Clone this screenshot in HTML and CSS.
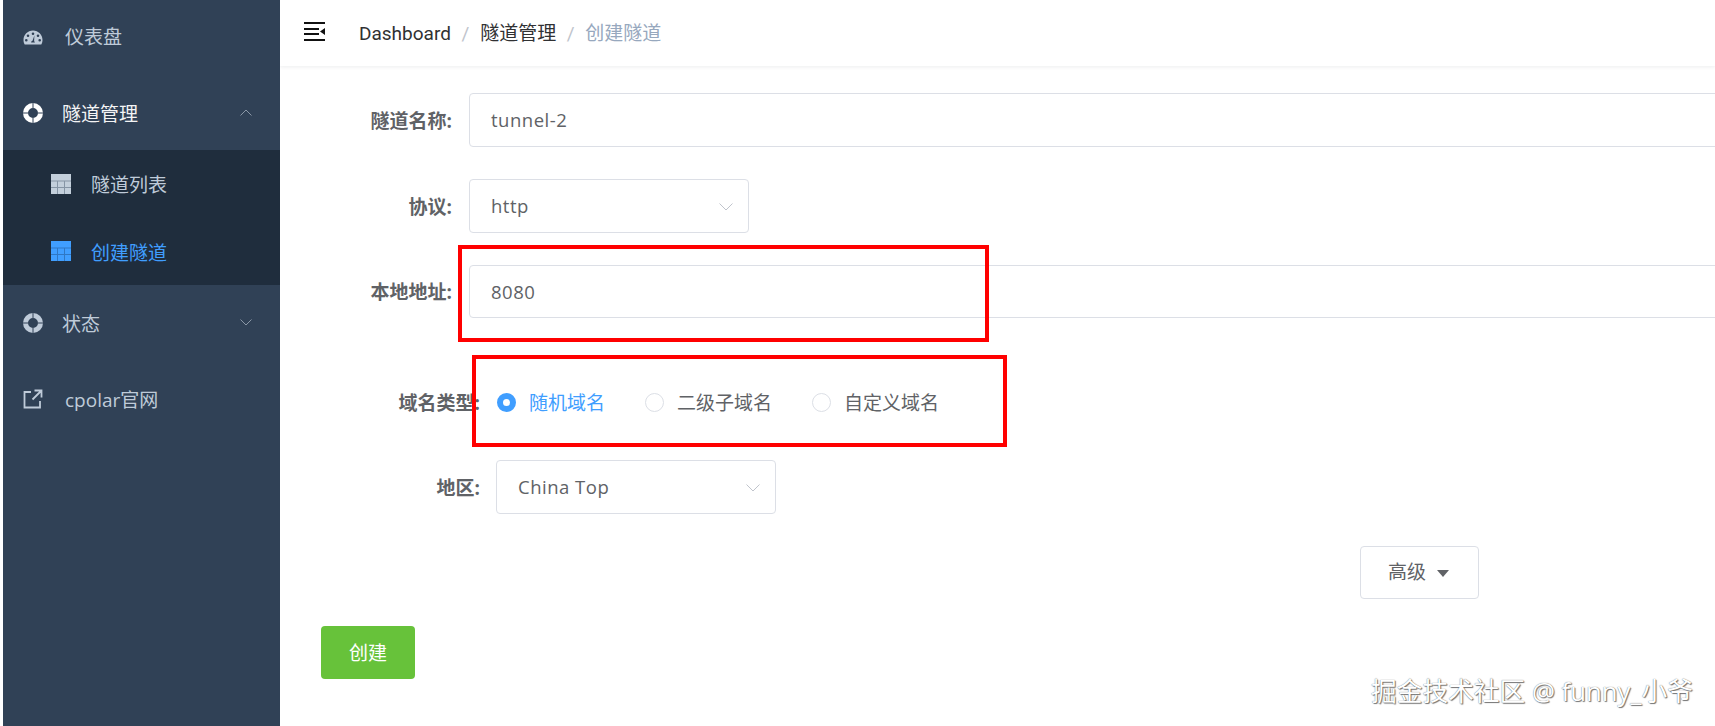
FILE: index.html
```html
<!DOCTYPE html>
<html>
<head>
<meta charset="utf-8" />
<title>创建隧道</title>
<link rel="stylesheet" href="styles.css">
</head>
<body>
<div class="app">
  <div class="sidebar">
    <a class="menu-row row-top">
      <svg class="menu-icon" viewBox="0 0 20 20"><path fill="#bfcbd9" fill-rule="evenodd" d="M10 2.500C4.600 2.500 .5 6.800 .5 12c0 1.800.5 3.300 1.200 4.500h16.600c.7-1.200 1.200-2.700 1.200-4.500 0-5.200-4.100-9.500-9.500-9.500zM10 4.500a1.300 1.300 0 1 1 0 2.600 1.300 1.300 0 0 1 0-2.600zM5 6.500a1.300 1.300 0 1 1 0 2.600 1.300 1.300 0 0 1 0-2.600zM15 6.500a1.300 1.300 0 1 1 0 2.600 1.300 1.300 0 0 1 0-2.600zM3.300 11a1.300 1.300 0 1 1 0 2.600 1.300 1.300 0 0 1 0-2.600zM16.700 11a1.300 1.300 0 1 1 0 2.600 1.300 1.300 0 0 1 0-2.600zM11.400 7.500l-.3 5.700a1.900 1.900 0 0 1 .8 1.300H8.100a1.900 1.900 0 0 1 1.400-1.700z"/></svg>
      <span>仪表盘</span>
    </a>
    <a class="menu-row is-open">
      <svg class="menu-icon" viewBox="0 0 20 20"><path fill="#fff" fill-rule="evenodd" d="M10 0a10 10 0 1 1 0 20 10 10 0 0 1 0-20zM10 5a5 5 0 1 0 0 10 5 5 0 0 0 0-10z"/><path stroke="#304156" stroke-width="1" d="M0 10h5M15 10h5M10 0v5M10 15v5"/></svg>
      <span>隧道管理</span>
      <svg class="chevron" viewBox="0 0 12 7"><path d="M.5 6.500 6 1l5.500 5.500" fill="none" stroke="#8a97a6"/></svg>
    </a>
    <div class="submenu">
      <a class="sub-row">
        <svg class="menu-icon" viewBox="0 0 20 20"><path fill="#8695a5" d="M0 0h20v20H0z"/><path fill="#c3cfdb" d="M0 0h20v6.500H0zM0 7.500h6v5.500H0zM7 7.500h6v5.500H7zM14 7.500h6v5.500h-6zM0 14h6v6H0zM7 14h6v6H7zM14 14h6v6h-6z"/></svg>
        <span>隧道列表</span>
      </a>
      <a class="sub-row is-active">
        <svg class="menu-icon" viewBox="0 0 20 20"><path fill="#2f77c4" d="M0 0h20v20H0z"/><path fill="#409eff" d="M0 0h20v6.500H0zM0 7.500h6v5.500H0zM7 7.500h6v5.500H7zM14 7.500h6v5.500h-6zM0 14h6v6H0zM7 14h6v6H7zM14 14h6v6h-6z"/></svg>
        <span>创建隧道</span>
      </a>
    </div>
    <a class="menu-row row-state">
      <svg class="menu-icon" viewBox="0 0 20 20"><path fill="#bfcbd9" fill-rule="evenodd" d="M10 0a10 10 0 1 1 0 20 10 10 0 0 1 0-20zM10 5a5 5 0 1 0 0 10 5 5 0 0 0 0-10z"/><path stroke="#304156" stroke-width="1" d="M0 10h5M15 10h5M10 0v5M10 15v5"/></svg>
      <span>状态</span>
      <svg class="chevron" viewBox="0 0 12 7"><path d="M.5.500 6 6l5.500-5.500" fill="none" stroke="#8a97a6"/></svg>
    </a>
    <a class="menu-row">
      <svg class="menu-icon" viewBox="0 0 20 20"><path fill="none" stroke="#bfcbd9" stroke-width="1.800" d="M8 3H1.500v15.500H17V12M11.500 1.500h7v7M18 2l-8.500 8.500"/></svg>
      <span>cpolar官网</span>
    </a>
  </div>

  <div class="main">
    <div class="navbar">
      <svg class="hamburger" viewBox="0 0 21 19"><path fill="#111" d="M0 0h21v2H0zM0 6h15v2H0zM0 11h15v2H0zM0 17h21v2H0zM21 6v7l-5-3.500z"/></svg>
      <div class="crumbs">
        <span>Dashboard</span><i>/</i><span>隧道管理</span><i>/</i><span class="crumb-last">创建隧道</span>
      </div>
    </div>

    <div class="form">
      <div class="form-row row-name">
        <label>隧道名称:</label>
        <div class="field field-wide">tunnel-2</div>
      </div>
      <div class="form-row row-proto">
        <label>协议:</label>
        <div class="field field-select">http
          <svg class="caret" viewBox="0 0 14 8"><path d="M.5.500 7 7l6.500-6.500" fill="none" stroke="#c0c4cc"/></svg>
        </div>
      </div>
      <div class="form-row row-addr">
        <label>本地地址:</label>
        <div class="field field-wide">8080</div>
      </div>
      <div class="form-row form-row-alt row-type">
        <label>域名类型:</label>
        <div class="radios">
          <span class="radio is-checked"><b></b>随机域名</span>
          <span class="radio"><b></b>二级子域名</span>
          <span class="radio"><b></b>自定义域名</span>
        </div>
      </div>
      <div class="form-row form-row-alt row-region">
        <label>地区:</label>
        <div class="field field-select">China Top
          <svg class="caret" viewBox="0 0 14 8"><path d="M.5.500 7 7l6.500-6.500" fill="none" stroke="#c0c4cc"/></svg>
        </div>
      </div>
      <div class="advanced-row">
        <button class="btn-advanced">高级<em></em></button>
      </div>
      <button class="btn-create">创建</button>
    </div>

    <div class="mark mark-addr"></div>
    <div class="mark mark-type"></div>
    <div class="watermark">掘金技术社区 @ funny_小爷</div>
  </div>
</div>
</body>
</html>
```

FILE: styles.css
```css
* {
  box-sizing: border-box;
}
html, body {
  margin: 0;
  height: 100%;
  overflow: hidden;
}
body {
  font-family: 'Open Sans', 'Noto Sans CJK SC', sans-serif;
  font-size: 19px;
  color: #606266;
  background: #fff;
}
.app {
  display: flex;
  height: 726px;
  padding-left: 3px;
}
.sidebar {
  width: 277px;
  flex: none;
  background: #304156;
  color: #bfcbd9;
}
.menu-row, .sub-row {
  display: flex;
  align-items: center;
  position: relative;
}
.menu-row {
  height: 75px;
  padding-left: 20px;
}
.menu-row.is-open {
  color: #f4f4f5;
}
.row-top span {
  margin-bottom: 4px;
}
.row-state {
  height: 76px;
}
.menu-icon {
  width: 20px;
  height: 20px;
  flex: none;
  margin-right: 22px;
}
.menu-row.is-open .menu-icon, .row-state .menu-icon {
  margin-right: 19px;
}
.chevron {
  position: absolute;
  right: 28px;
  top: 34px;
  width: 12px;
  height: 7px;
}
.submenu {
  background: #1f2d3d;
  height: 135px;
}
.sub-row {
  height: 67.5px;
  padding-left: 48px;
}
.sub-row .menu-icon {
  margin-right: 20px;
}
.sub-row.is-active span {
  margin-top: 2px;
}
.sub-row.is-active {
  color: #409eff;
}
.main {
  flex: 1;
  min-width: 0;
  position: relative;
  overflow: hidden;
}
.navbar {
  height: 66px;
  display: flex;
  align-items: center;
  padding: 0 0 3px 24px;
  box-shadow: 0 1px 4px rgba(0, 21, 41, .08);
}
.hamburger {
  width: 21px;
  height: 19px;
  margin-right: 34px;
}
.crumbs {
  font-family: Roboto, 'Noto Sans CJK SC', sans-serif;
  color: #303133;
  white-space: nowrap;
}
.crumbs i {
  font-style: normal;
  color: #c0c4cc;
  margin: 0 10.700px;
}
.crumb-last {
  color: #97a8be;
}
.form {
  padding: 27px 0 0 0;
}
.form-row {
  display: flex;
  align-items: center;
  height: 53.500px;
}
.form-row label {
  width: 172px;
  margin-right: 17px;
  text-align: right;
  font-weight: bold;
  flex: none;
}
.form-row-alt label {
  width: 200px;
  margin-right: 16px;
}
.row-name {
  margin-bottom: 32.500px;
}
.row-proto {
  margin-bottom: 32px;
}
.row-addr {
  margin-bottom: 57.500px;
}
.row-type {
  margin-bottom: 31px;
}
.field {
  height: 100%;
  border: 1px solid #dcdfe6;
  border-radius: 4px;
  padding: 0 21px;
  display: flex;
  align-items: center;
  position: relative;
  white-space: nowrap;
  flex: none;
  font-size: 18.5px;
  letter-spacing: .5px;
}
.field-wide {
  width: 1400px;
}
.field-select {
  width: 280px;
}
.caret {
  position: absolute;
  right: 15px;
  top: 23px;
  width: 14px;
  height: 8px;
}
.radios {
  display: flex;
  margin-left: 1px;
}
.radio {
  display: flex;
  align-items: center;
  margin-right: 40px;
  white-space: nowrap;
}
.radio b {
  width: 19px;
  height: 19px;
  border: 1px solid #dcdfe6;
  border-radius: 50%;
  margin-right: 13px;
}
.radio.is-checked {
  color: #409eff;
}
.radio.is-checked b {
  border: 6.500px solid #409eff;
  background: #fff;
}
.advanced-row {
  padding: 32px 0 0 1080px;
}
.btn-advanced, .btn-create {
  font: inherit;
  border-radius: 4px;
  height: 53px;
  display: block;
}
.btn-advanced {
  width: 119px;
  background: #fff;
  color: #606266;
  border: 1px solid #dcdfe6;
  padding: 0 2px 3px 0;
}
.btn-advanced em {
  display: inline-block;
  border: 6px solid transparent;
  border-top: 7px solid #606266;
  border-bottom: 0;
  margin-left: 11px;
  vertical-align: 2px;
}
.btn-create {
  width: 94px;
  margin: 27px 0 0 41px;
  background: #67c23a;
  color: #fff;
  border: 0;
}
.mark {
  position: absolute;
  border: 4px solid #f00;
  pointer-events: none;
}
.mark-addr {
  left: 178px;
  top: 245px;
  width: 531px;
  height: 97px;
}
.mark-type {
  left: 192px;
  top: 355px;
  width: 535px;
  height: 92px;
}
.watermark {
  position: absolute;
  right: 22px;
  top: 671px;
  font-size: 25.700px;
  color: #fff;
  text-shadow: 0 0 1px #555, 1px 1px 1px #777;
  white-space: nowrap;
}
```
